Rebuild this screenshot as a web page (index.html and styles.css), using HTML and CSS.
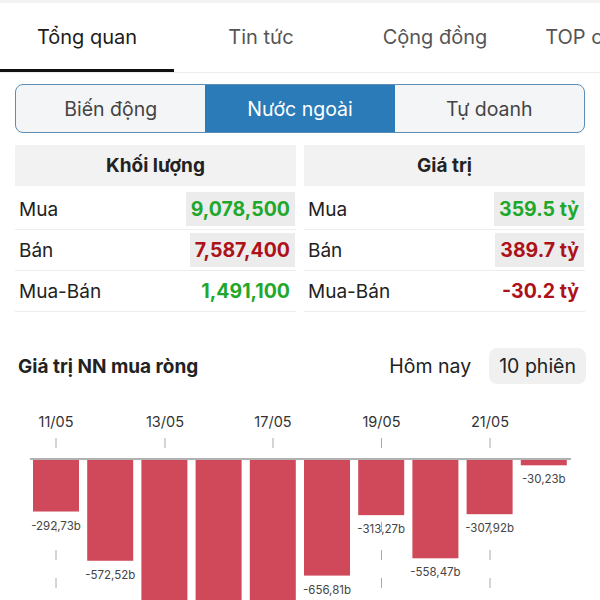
FILE: index.html
```html
<!DOCTYPE html>
<html lang="vi">
<head>
    <meta charset="UTF-8">
    <meta name="viewport" content="width=device-width, initial-scale=1.0">
    <title>Nước ngoài</title>
<link rel="stylesheet" href="styles.css">
</head>
<body>
    <div class="topbar"></div>

    <div class="tabs">
        <div class="tab active">Tổng quan</div>
        <div class="tab">Tin tức</div>
        <div class="tab">Cộng đồng</div>
        <div class="tab">TOP cổ phiếu</div>
    </div>

    <div class="segment">
        <div class="seg">Biến động</div>
        <div class="seg on">Nước ngoài</div>
        <div class="seg">Tự doanh</div>
    </div>

    <div class="tables">
        <div class="col">
            <div class="head">Khối lượng</div>
            <div class="row"><span>Mua</span><b class="val up box">9,078,500</b></div>
            <div class="row"><span>Bán</span><b class="val down box">7,587,400</b></div>
            <div class="row"><span>Mua-Bán</span><b class="val up">1,491,100</b></div>
        </div>
        <div class="col">
            <div class="head">Giá trị</div>
            <div class="row"><span>Mua</span><b class="val up box">359.5 tỷ</b></div>
            <div class="row"><span>Bán</span><b class="val down box">389.7 tỷ</b></div>
            <div class="row"><span>Mua-Bán</span><b class="val down">-30.2 tỷ</b></div>
        </div>
    </div>

    <div class="chart-head">
        <h2>Giá trị NN mua ròng</h2>
        <div class="range">
            <span class="opt">Hôm nay</span>
            <span class="opt sel">10 phiên</span>
        </div>
    </div>

    <svg class="chart" width="600" height="217" viewBox="0 0 600 217">
        <g class="grid">
            <line x1="56" y1="54" x2="56" y2="217"/>
            <line x1="165" y1="54" x2="165" y2="217"/>
            <line x1="273" y1="54" x2="273" y2="217"/>
            <line x1="381.5" y1="54" x2="381.5" y2="217"/>
            <line x1="490" y1="54" x2="490" y2="217"/>
        </g>
        <g class="dates">
            <text x="56" y="43">11/05</text>
            <text x="165" y="43">13/05</text>
            <text x="273" y="43">17/05</text>
            <text x="381.5" y="43">19/05</text>
            <text x="490" y="43">21/05</text>
        </g>
        <line class="axis" x1="30" y1="75" x2="571" y2="75"/>
        <g id="bars"></g>
    </svg>

    <script>
        // gia tri NN mua rong 10 phien (ty dong)
        const data = [-292.73, -572.52, -870.4, -920.1, -890.6, -656.81, -313.27, -558.47, -307.92, -30.23];
        const shown = [true, true, false, false, false, true, true, true, true, true];
        const scale = 0.176;
        const bars = document.getElementById('bars');
        let html = '';
        data.forEach(function(v, i){
            const x = 33 + i * 54.2;
            const h = Math.abs(v) * scale;
            html += '<rect x="' + x + '" y="76" width="46" height="' + h + '"/>';
            if(shown[i]){
                const label = v.toFixed(2).replace('.', ',') + 'b';
                html += '<text x="' + (x + 23) + '" y="' + (76 + h + 18) + '">' + label + '</text>';
            }
        });
        bars.innerHTML = html;
    </script>
</body>
</html>
```

FILE: styles.css
```css
*{
    box-sizing: border-box;
}
body{
    margin: 0;
    width: 600px;
    height: 600px;
    overflow: hidden;
    background: #fff;
    font-family: Inter, "Noto Sans", sans-serif;
    color: #222;
}
.topbar{
    height: 3px;
    background: #f3f3f3;
}

/* tab tren cung */
.tabs{
    display: flex;
    height: 70px;
    border-bottom: 1px solid #ececec;
    white-space: nowrap;
    overflow: hidden;
}
.tab{
    flex: 0 0 174px;
    text-align: center;
    font-size: 20px;
    color: #555;
    padding-top: 22px;
}
.tab.active{
    color: #1c1c1c;
    border-bottom: 3px solid #111;
}

/* nut chon */
.segment{
    display: flex;
    margin: 11px 15px 0;
    height: 49px;
    border: 1.5px solid #5b8db6;
    border-radius: 8px;
    overflow: hidden;
    background: #f4f5f7;
}
.seg{
    flex: 1;
    display: flex;
    align-items: center;
    justify-content: center;
    font-size: 19.5px;
    color: #444;
}
.seg.on{
    background: #2b7bb8;
    color: #fff;
}

/* bang khoi luong / gia tri */
.tables{
    display: flex;
    gap: 8px;
    margin: 12px 15px 0;
}
.col{
    flex: 1;
}
.head{
    height: 41px;
    background: #f2f2f2;
    text-align: center;
    font-weight: 700;
    font-size: 19px;
    line-height: 41px;
    margin-bottom: 3px;
}
.row{
    display: flex;
    justify-content: space-between;
    align-items: center;
    height: 41px;
    padding: 3px 1px 3px 4px;
    border-bottom: 1px solid #ededed;
    font-size: 19px;
}
.val{
    font-weight: 700;
    font-size: 19.5px;
    padding: 0 5px;
    height: 34px;
    line-height: 34px;
}
.box{
    background: #ececec;
}
.up{
    color: #1fa82c;
}
.down{
    color: #ad1119;
}

/* bieu do */
.chart-head{
    display: flex;
    justify-content: space-between;
    align-items: center;
    margin: 36px 14px 0 18px;
    height: 36px;
}
.chart-head h2{
    margin: 0;
    font-size: 19px;
    font-weight: 700;
}
.range{
    display: flex;
    align-items: center;
    gap: 8px;
}
.opt{
    font-size: 19.5px;
    padding: 0 10px;
    height: 36px;
    line-height: 36px;
    border-radius: 8px;
    color: #222;
}
.opt.sel{
    background: #f0f0f0;
}
.chart{
    display: block;
}
.grid line{
    stroke: #aaa;
    stroke-width: 1;
    stroke-dasharray: 10 18;
}
.dates text{
    font-size: 14.5px;
    fill: #333;
    text-anchor: middle;
}
.axis{
    stroke: #999;
    stroke-width: 1.5;
}
#bars rect{
    fill: #d0495a;
}
#bars text{
    font-size: 11.5px;
    fill: #444;
    text-anchor: middle;
}
```
